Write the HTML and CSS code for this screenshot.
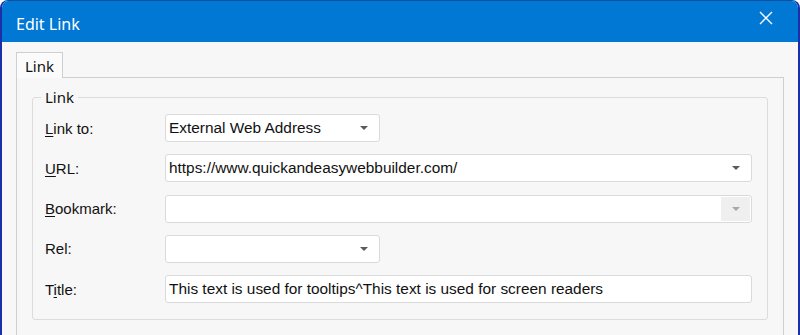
FILE: index.html
```html
<!DOCTYPE html>
<html lang="en">
<head>
  <meta charset="UTF-8" />
  <title>Edit Link</title>
  <link rel="stylesheet" href="styles.css">
</head>
<body>
  <div class="window">
    <div class="titlebar">
      <span class="title">Edit Link</span>
      <svg class="close" width="14" height="14" viewBox="0 0 14 14">
        <path d="M1 1 L13 13 M13 1 L1 13" stroke="#fff" stroke-width="1.4" fill="none" />
      </svg>
    </div>

    <div class="content">
      <div class="tabs">
        <div class="tab">Link</div>
      </div>
      <div class="panel">
        <fieldset class="group">
          <legend>Link</legend>

          <div class="row">
            <label><u>L</u>ink to:</label>
            <div class="field short">
              <span class="value">External Web Address</span>
              <span class="arrow"></span>
            </div>
          </div>

          <div class="row">
            <label><u>U</u>RL:</label>
            <div class="field long">
              <span class="value">https://www.quickandeasywebbuilder.com/</span>
              <span class="arrow"></span>
            </div>
          </div>

          <div class="row">
            <label><u>B</u>ookmark:</label>
            <div class="field long disabled">
              <span class="value"></span>
              <span class="btn"><span class="arrow"></span></span>
            </div>
          </div>

          <div class="row">
            <label>Rel:</label>
            <div class="field short">
              <span class="value"></span>
              <span class="arrow"></span>
            </div>
          </div>

          <div class="row">
            <label>T<u>i</u>tle:</label>
            <div class="field long">
              <span class="value">This text is used for tooltips^This text is used for screen readers</span>
            </div>
          </div>
        </fieldset>
      </div>
    </div>
  </div>
</body>
</html>
```

FILE: styles.css
```css
body {
  margin: 0;
  background: #fff;
  font-family: "Liberation Sans", Arial, sans-serif;
}
.window {
  width: 800px;
  height: 335px;
  box-sizing: border-box;
  border: 2px solid #1b2fa8;
  border-top: 1px solid #0b4fa0;
  border-bottom: none;
  border-radius: 8px 8px 0 0;
  overflow: hidden;
  display: flex;
  flex-direction: column;
  background: #f7f7f7;
}
.titlebar {
  height: 41px;
  flex: none;
  background: #0078d4;
  display: flex;
  align-items: center;
  justify-content: space-between;
  padding: 0 25px 0 14px;
}
.title {
  color: #fff;
  font-family: "Noto Sans", sans-serif;
  font-size: 16px;
  margin-top: 5px;
}
.close {
  margin-top: -7px;
}
.content {
  flex: 1;
  padding: 10px 14px 0;
  display: flex;
  flex-direction: column;
}
.tabs {
  display: flex;
}
.tab {
  height: 26px;
  box-sizing: border-box;
  padding: 0 8px;
  border: 1px solid #cfcfcf;
  border-bottom: none;
  background: #fbfbfb;
  font-family: "Noto Sans", sans-serif;
  font-size: 15px;
  line-height: 27px;
  color: #111;
  position: relative;
  z-index: 1;
  margin-bottom: -1px;
}
.panel {
  flex: 1;
  border: 1px solid #cfcfcf;
  border-bottom: none;
  padding: 9px 15px 0;
}
.group {
  margin: 0;
  border: 1px solid #dcdcdc;
  border-radius: 3px;
  padding: 7px 15px 16px 12px;
  display: flex;
  flex-direction: column;
  gap: 12.25px;
}
.group legend {
  font-family: "Noto Sans", sans-serif;
  font-size: 15px;
  line-height: 20px;
  padding: 0 4px;
  margin-left: -4px;
  color: #111;
}
.row {
  display: flex;
  align-items: center;
  height: 28px;
}
.row label {
  width: 120px;
  flex: none;
  font-size: 15px;
  color: #111;
}
.row u {
  text-decoration-thickness: 1px;
  text-underline-offset: 2px;
}
.field {
  height: 28px;
  box-sizing: border-box;
  border: 1px solid #dadada;
  border-radius: 3px;
  background: #fff;
  display: flex;
  align-items: center;
  padding-left: 3px;
  font-size: 15.4px;
  color: #111;
}
.field.short {
  width: 215px;
}
.field.long {
  flex: 1;
}
.value {
  flex: 1;
  white-space: nowrap;
}
.arrow {
  width: 0;
  height: 0;
  border-left: 4px solid transparent;
  border-right: 4px solid transparent;
  border-top: 4px solid #5a5a5a;
  margin-right: 11px;
}
.disabled .btn {
  align-self: stretch;
  width: 29px;
  margin: 1px;
  background: #efefef;
  display: flex;
  align-items: center;
  justify-content: center;
}
.disabled .arrow {
  border-top-color: #a8a8a8;
  margin-right: 0;
}
```
